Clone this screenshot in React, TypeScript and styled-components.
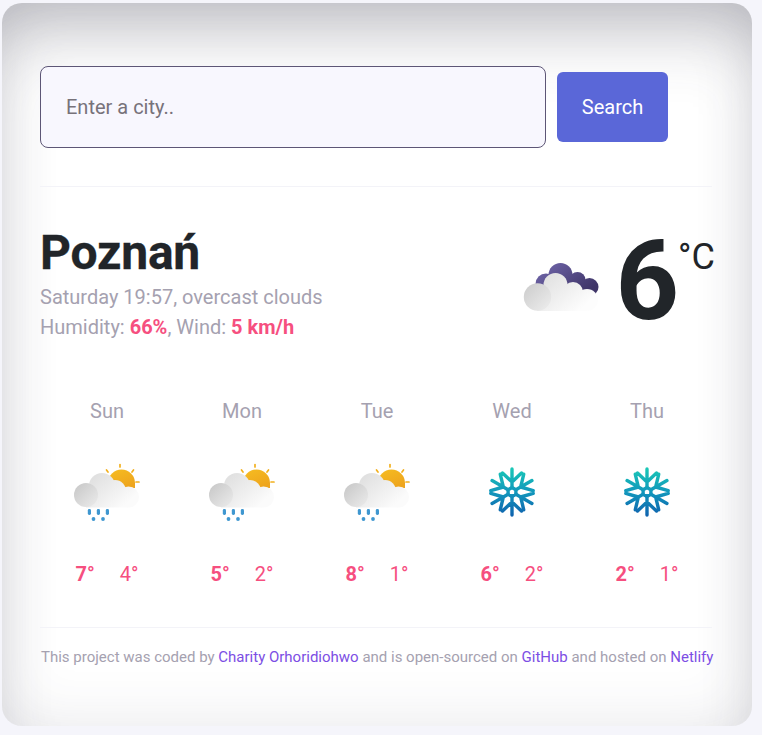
import React from "react";
import styled, { createGlobalStyle } from "styled-components";

const GlobalStyle = createGlobalStyle`
  html, body { margin: 0; padding: 0; background: #f5f5fb; }
  body { font-family: Roboto, "Liberation Sans", sans-serif; }
`;

const Card = styled.main`
  box-sizing: border-box;
  width: 750px;
  height: 723px;
  margin: 3px 0 0 2px;
  padding: 63px 40px 0 38px;
  background: #fff;
  border-radius: 20px;
  box-shadow: inset 0 50px 70px -25px rgba(60, 60, 75, 0.3), inset 0 0 60px rgba(60, 60, 85, 0.13);
`;

const SearchForm = styled.form`
  display: flex;
  align-items: center;
  gap: 11px;
  padding-bottom: 38px;
  border-bottom: 1px solid #f3f3f8;
`;

const CityInput = styled.input`
  box-sizing: border-box;
  width: 506px;
  height: 82px;
  padding: 0 25px;
  background: #f8f7fe;
  border: 1px solid #5d5676;
  border-radius: 8px;
  font: 400 20px Roboto, sans-serif;
  outline: none;
  &::placeholder { color: #77727a; opacity: 1; }
`;

const SearchButton = styled.button`
  width: 111px;
  height: 70px;
  background: #5a67d8;
  border: none;
  border-radius: 6px;
  color: #fff;
  font: 400 20px Roboto, sans-serif;
`;

const Current = styled.section`
  display: flex;
  justify-content: space-between;
  padding-top: 33px;
  height: 160px;
`;

const CityName = styled.h1`
  margin: 4px 0 0;
  font-size: 48px;
  line-height: 58px;
  font-weight: 700;
  letter-spacing: -0.2px;
  -webkit-text-stroke: 0.3px #212529;
  color: #212529;
`;

const Detail = styled.p`
  margin: 0;
  font-size: 20px;
  line-height: 30px;
  color: #a5a1b0;
`;

const Strong = styled.strong`
  color: #f64f7f;
  font-weight: 700;
`;

const Reading = styled.div`
  display: flex;
  align-items: flex-start;
  margin-right: -3px;
`;

const Temp = styled.span`
  font-size: 111px;
  line-height: 120px;
  font-weight: 700;
  color: #212529;
  margin-left: 14px;
  margin-top: 1px;
`;

const Unit = styled.span`
  font-size: 36px;
  line-height: 40px;
  color: #212529;
  margin-left: -1px;
  margin-top: 17px;
`;

const Forecast = styled.section`
  display: grid;
  grid-template-columns: repeat(5, 135px);
  margin-top: 16px;
  padding-bottom: 38px;
  border-bottom: 1px solid #f3f3f8;
`;

const Day = styled.div`
  display: flex;
  flex-direction: column;
  align-items: center;
  padding-right: 1px;
`;

const DayName = styled.div`
  font-size: 20px;
  line-height: 30px;
  color: #a5a1b0;
`;

const IconSlot = styled.div`
  height: 70px;
  margin: 29px 0 34px;
`;

const Temps = styled.div`
  display: flex;
  gap: 25px;
  font-size: 20px;
  line-height: 30px;
  color: #f64f7f;
`;

const Footer = styled.footer`
  margin-top: 18px;
  padding-left: 1px;
  text-align: center;
  font-size: 15px;
  line-height: 22px;
  color: #a5a1b0;
  white-space: nowrap;
`;

const Link = styled.a`
  color: #7c4ee4;
  text-decoration: none;
`;

const SunCloudRain = ({ id }: { id: string }) => (
  <svg width="70" height="70" viewBox="0 0 70 70">
    <defs>
      <linearGradient id={`sun${id}`} x1="0" y1="0" x2="0.6" y2="1">
        <stop offset="0" stopColor="#f6bd22" />
        <stop offset="1" stopColor="#eea51d" />
      </linearGradient>
      <linearGradient id={`cloud${id}`} gradientUnits="userSpaceOnUse" x1="18" y1="20" x2="48" y2="54">
        <stop offset="0" stopColor="#dedede" />
        <stop offset="1" stopColor="#fbfbfb" />
      </linearGradient>
      <linearGradient id={`puff${id}`} x1="0" y1="0" x2="1" y2="1">
        <stop offset="0" stopColor="#c6c6c6" />
        <stop offset="1" stopColor="#ececec" />
      </linearGradient>
    </defs>
    <g stroke="#f2b01e" strokeWidth="1.700" strokeLinecap="round">
      <line x1="48" y1="9.500" x2="48" y2="12" />
      <line x1="34.500" y1="15" x2="36" y2="17" />
      <line x1="61.500" y1="15" x2="60" y2="17" />
      <line x1="64" y1="27" x2="67" y2="27" />
    </g>
    <path d="M36 28a13.500 13.500 0 0 1 27 0v5H40z" fill={`url(#sun${id})`} />
    <g fill={`url(#cloud${id})`}>
      <circle cx="30" cy="31" r="13" />
      <circle cx="43" cy="36" r="11" />
      <circle cx="56.500" cy="42" r="10.500" />
      <rect x="14" y="36" width="42" height="16.500" />
    </g>
    <circle cx="14" cy="40" r="12" fill={`url(#puff${id})`} />
    <g fill="#3f97d0">
      <rect x="15.800" y="54" width="3.200" height="6" rx="1.400" />
      <rect x="24.800" y="54" width="3.200" height="6" rx="1.400" />
      <rect x="33.800" y="54" width="3.200" height="6" rx="1.400" />
      <circle cx="21.500" cy="64" r="1.900" />
      <circle cx="31" cy="64" r="1.900" />
    </g>
  </svg>
);

// one arm pointing up from the flake's centre, as [x, y] polylines
const ARM = [
  [[0, -4.500], [0, -23]],
  [[-9.500, -19], [0, -10], [9.500, -19]],
];

const flakePath = () => {
  let d = "";
  for (let k = 0; k < 6; k++) {
    const a = (k * Math.PI) / 3;
    const c = Math.cos(a);
    const s = Math.sin(a);
    for (const line of ARM) {
      d += line
        .map(([x, y], i) => `${i ? "L" : "M"}${(35 + x * c - y * s).toFixed(2)} ${(37 + x * s + y * c).toFixed(2)}`)
        .join("");
    }
  }
  return d;
};

const Snowflake = ({ id }: { id: string }) => (
  <svg width="70" height="70" viewBox="0 0 70 70">
    <defs>
      <linearGradient id={`snow${id}`} gradientUnits="userSpaceOnUse" x1="35" y1="13" x2="35" y2="61">
        <stop offset="0" stopColor="#1ac8b6" />
        <stop offset="0.5" stopColor="#1297bc" />
        <stop offset="1" stopColor="#0f62ae" />
      </linearGradient>
    </defs>
    <g fill="none" stroke={`url(#snow${id})`} strokeWidth="3.400" strokeLinecap="round" strokeLinejoin="round">
      <path d={flakePath()} />
      <path d="M35 32.500l3.900 2.250v4.500L35 41.500l-3.900-2.250v-4.500z" />
    </g>
  </svg>
);

const DarkClouds = () => (
  <svg width="84" height="70" viewBox="0 0 84 70" style={{ marginTop: 30 }}>
    <defs>
      <linearGradient id="dark" gradientUnits="userSpaceOnUse" x1="30" y1="13" x2="60" y2="50">
        <stop offset="0" stopColor="#6d63a6" />
        <stop offset="1" stopColor="#3f3568" />
      </linearGradient>
      <linearGradient id="front" gradientUnits="userSpaceOnUse" x1="28" y1="24" x2="60" y2="62">
        <stop offset="0" stopColor="#e0e0e0" />
        <stop offset="1" stopColor="#fdfdfd" />
      </linearGradient>
      <linearGradient id="ball" x1="0" y1="0" x2="1" y2="1">
        <stop offset="0" stopColor="#cbcbcb" />
        <stop offset="1" stopColor="#eeeeee" />
      </linearGradient>
    </defs>
    <g fill="url(#dark)">
      <circle cx="29" cy="34" r="10.500" />
      <circle cx="43.500" cy="25" r="12" />
      <circle cx="60.500" cy="30" r="8" />
      <circle cx="72.500" cy="37" r="9" />
      <rect x="29" y="30" width="43" height="15" />
    </g>
    <g fill="url(#front)">
      <circle cx="38.500" cy="35" r="12" />
      <circle cx="56" cy="42" r="10" />
      <circle cx="70" cy="50" r="11" />
      <rect x="20" y="40" width="50" height="21" />
    </g>
    <circle cx="20.500" cy="47" r="13.700" fill="url(#ball)" />
  </svg>
);

const days = [
  { name: "Sun", hi: 7, lo: 4, snow: false },
  { name: "Mon", hi: 5, lo: 2, snow: false },
  { name: "Tue", hi: 8, lo: 1, snow: false },
  { name: "Wed", hi: 6, lo: 2, snow: true },
  { name: "Thu", hi: 2, lo: 1, snow: true },
];

export default function App() {
  return (
    <>
      <GlobalStyle />
      <Card>
        <SearchForm onSubmit={(e) => e.preventDefault()}>
          <CityInput placeholder="Enter a city.." />
          <SearchButton type="submit">Search</SearchButton>
        </SearchForm>

        <Current>
          <div>
            <CityName>Poznań</CityName>
            <Detail>Saturday 19:57, overcast clouds</Detail>
            <Detail>
              Humidity: <Strong>66%</Strong>, Wind: <Strong>5 km/h</Strong>
            </Detail>
          </div>
          <Reading>
            <DarkClouds />
            <Temp>6</Temp>
            <Unit>°C</Unit>
          </Reading>
        </Current>

        <Forecast>
          {days.map((d) => (
            <Day key={d.name}>
              <DayName>{d.name}</DayName>
              <IconSlot>{d.snow ? <Snowflake id={d.name} /> : <SunCloudRain id={d.name} />}</IconSlot>
              <Temps>
                <Strong>{d.hi}°</Strong>
                <span>{d.lo}°</span>
              </Temps>
            </Day>
          ))}
        </Forecast>

        <Footer>
          This project was coded by <Link href="#">Charity Orhoridiohwo</Link> and is open-sourced on{" "}
          <Link href="#">GitHub</Link> and hosted on <Link href="#">Netlify</Link>
        </Footer>
      </Card>
    </>
  );
}
